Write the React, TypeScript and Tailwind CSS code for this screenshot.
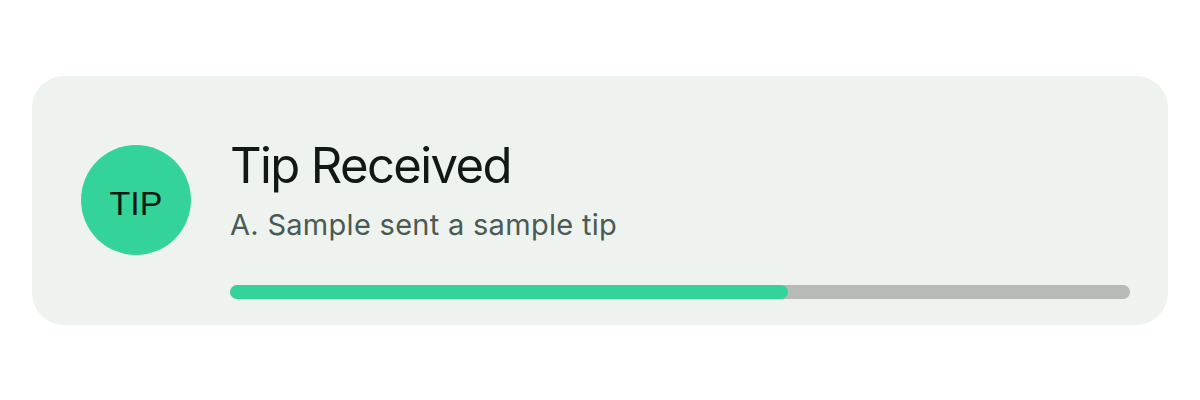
export default function App() {
  const progress = 62;

  return (
    <div className="min-h-screen bg-white px-8 pt-[76px]" style={{ fontFamily: "Inter, 'Noto Sans', sans-serif" }}>
      <div className="flex items-start rounded-[32px] bg-[#eef3f0] pt-[65px] pb-[26px] pl-[49px] pr-[38px]">
        <div
          className="mt-[4px] flex h-[110px] w-[110px] shrink-0 items-center justify-center rounded-full bg-[#34d399] pt-[7px] text-[34px] text-[#0f1a14]"
          style={{ fontFamily: "'Liberation Sans', Arial, sans-serif" }}
        >
          TIP
        </div>
        <div className="ml-[39px] flex-1">
          <h2 className="text-[49px] leading-none tracking-[-0.033em] text-[#111815]">Tip Received</h2>
          <p className="mt-[20px] text-[29px] leading-none tracking-[0.01em] text-[#4b5a52]">A. Sample sent a sample tip</p>
          <div className="mt-[46px] h-[14px] w-full overflow-hidden rounded-full bg-[#b6bbb7]">
            <div className="h-full rounded-full bg-[#34d399]" style={{ width: `${progress}%` }} />
          </div>
        </div>
      </div>
    </div>
  );
}
